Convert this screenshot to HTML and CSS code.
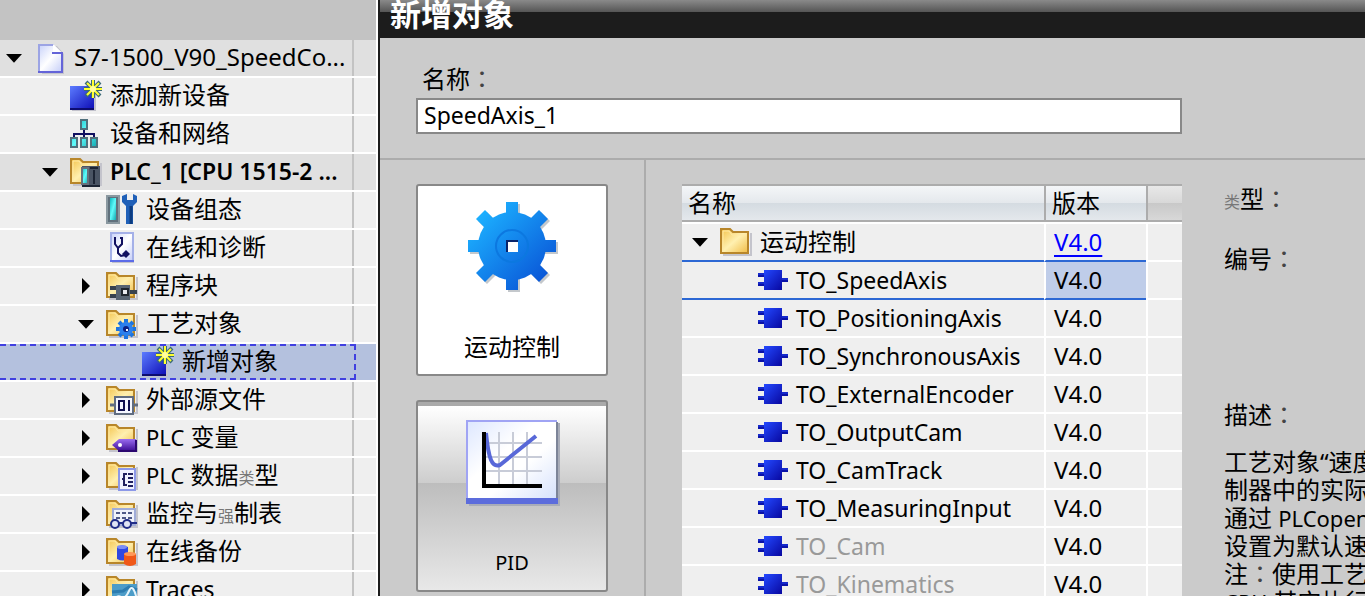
FILE: index.html
```html
<!DOCTYPE html>
<html lang="zh-CN">
<head>
  <meta charset="UTF-8">
  <meta name="viewport" content="width=device-width, initial-scale=1.0">
  <title>新增对象</title>
  <link rel="stylesheet" href="styles.css">
</head>
<body>
  <!-- Shared icon shapes -->
  <svg class="defs" aria-hidden="true">
    <defs>
      <linearGradient id="gold" x1="0" y1="0" x2="1" y2="1">
        <stop offset="0" stop-color="#f3c24a"/><stop offset=".5" stop-color="#fff0b0"/><stop offset="1" stop-color="#f0bb45"/>
      </linearGradient>
      <linearGradient id="blue" x1="0" y1="0" x2="1" y2="1">
        <stop offset="0" stop-color="#5c7cff"/><stop offset="1" stop-color="#1010b8"/>
      </linearGradient>
      <linearGradient id="chip" x1="0" y1="0" x2="1" y2="1">
        <stop offset="0" stop-color="#2348ff"/><stop offset="1" stop-color="#0808a0"/>
      </linearGradient>
      <linearGradient id="paper" x1="0" y1="0" x2="1" y2="1">
        <stop offset="0" stop-color="#c8d2fa"/><stop offset=".5" stop-color="#ffffff"/><stop offset="1" stop-color="#c4cdf8"/>
      </linearGradient>
      <linearGradient id="sheet" x1="0" y1="0" x2="1" y2="1">
        <stop offset="0" stop-color="#dce6ff"/><stop offset=".4" stop-color="#ffffff"/><stop offset=".6" stop-color="#ffffff"/><stop offset="1" stop-color="#d4e0fc"/>
      </linearGradient>
      <linearGradient id="sky" gradientUnits="userSpaceOnUse" x1="14" y1="14" x2="78" y2="78">
        <stop offset="0" stop-color="#1cb0ff"/><stop offset="1" stop-color="#0a58d8"/>
      </linearGradient>
      <linearGradient id="cyan" x1="0" y1="0" x2="1" y2="1">
        <stop offset="0" stop-color="#10b8c0"/><stop offset=".5" stop-color="#60fafa"/><stop offset="1" stop-color="#10a8b0"/>
      </linearGradient>
      <linearGradient id="tag" x1="0" y1="0" x2="0" y2="1">
        <stop offset="0" stop-color="#9a6cf0"/><stop offset="1" stop-color="#3c0c94"/>
      </linearGradient>
    </defs>
    <symbol id="folder" viewBox="0 0 32 32">
      <path d="M3 29h28V7" fill="none" stroke="#c4c4cc" stroke-width="2"/>
      <path d="M1 3h9l3 3h15v21H1z" fill="url(#gold)" stroke="#b8862a" stroke-width="2"/>
      <path d="M3 26V5h6l3 4h14" fill="none" stroke="#ffe9a4" stroke-width="1"/>
    </symbol>
    <symbol id="new" viewBox="0 0 32 32">
      <path d="M2 8h24v23H2z" fill="#c2c2cc"/>
      <path d="M0 6h24v22H0z" fill="url(#blue)"/>
      <path d="M0 28h24v2H0z" fill="#0c0c70"/>
      <path d="M23 0v18M14 9h18M16 2l14 14M30 2L16 16" stroke="#3a6a78" stroke-width="4"/>
      <path d="M23 0v18M14 9h18M17 3l12 12M29 3L17 15" stroke="#ffff30" stroke-width="2"/>
      <circle cx="23" cy="9" r="3" fill="#ffffa0"/>
    </symbol>
    <symbol id="block" viewBox="0 0 32 32">
      <path d="M0 11h8M0 20h8M22 16h8" stroke="#0a12a8" stroke-width="4"/>
      <path d="M0 10h7M0 19h7M23 15h7" stroke="#2040f0" stroke-width="1"/>
      <path d="M6 6h18v20H6z" fill="url(#chip)"/>
    </symbol>
  </svg>

  <div class="app">
    <nav class="sidebar">
      <div class="sidebar-head"></div>
      <ul class="tree">
        <li class="row root shaded">
          <div class="cell">
            <i class="arrow down"></i>
            <svg class="icon" viewBox="0 0 32 32">
              <path d="M4 4h15l7 8v20H4z" fill="#c4c4cc"/>
              <path d="M1 3h15l8 8v19H1z" fill="url(#paper)"/>
              <path d="M1 30V3h15" fill="none" stroke="#9ca4e4" stroke-width="2"/>
              <path d="M15 2v9h9z" fill="#fff"/>
              <path d="M14 11h10v19H0" fill="none" stroke="#6464d8" stroke-width="2"/>
            </svg>
            <span>S7-1500_V90_SpeedCo...</span>
          </div>
        </li>
        <li class="row l1">
          <div class="cell">
            <svg class="icon"><use href="#new"/></svg>
            <span>添加新设备</span>
          </div>
        </li>
        <li class="row l1">
          <div class="cell">
            <svg class="icon" viewBox="0 0 32 32">
              <path d="M14 10v9M4 22v-6h20v6" fill="none" stroke="#101060" stroke-width="2"/>
              <g fill="url(#cyan)" stroke="#50707c" stroke-width="2">
                <path d="M11 2h6v9h-6zM1 20h6v9H1zM11 20h6v9h-6zM21 20h6v9h-6z"/>
              </g>
            </svg>
            <span>设备和网络</span>
          </div>
        </li>
        <li class="row l1 shaded">
          <div class="cell">
            <i class="arrow down"></i>
            <svg class="icon" viewBox="0 0 32 32">
              <use href="#folder" width="32" height="32"/>
              <path d="M12 10h18v20H12z" fill="#4a5464"/>
              <path d="M12 12h6v16h-6z" fill="url(#cyan)" stroke="#66707c" stroke-width="2"/>
              <path d="M20 12h8M24 14v14M12 30h18" stroke="#1c2434" stroke-width="2"/>
            </svg>
            <span class="en bold">PLC_1 [CPU 1515-2 ...</span>
          </div>
        </li>
        <li class="row l2">
          <div class="cell">
            <svg class="icon" viewBox="0 0 32 32">
              <path d="M1 2h12v27H1z" fill="#60707c" stroke="#8a98a0" stroke-width="2"/>
              <path d="M4 4h6v22H4z" fill="url(#cyan)"/>
              <path d="M16 2v6l4 4v18h7V12l4-4V2l-4-2v6h-6V0z" fill="#2060b8"/>
              <path d="M25 12v18" stroke="#0c3c80" stroke-width="3"/>
            </svg>
            <span>设备组态</span>
          </div>
        </li>
        <li class="row l2">
          <div class="cell">
            <svg class="icon" viewBox="0 0 32 32">
              <path d="M6 3h22v28H6z" fill="#c2c2cc"/>
              <path d="M5 1h22v28H5z" fill="url(#paper)" stroke="#a4b0e8" stroke-width="2"/>
              <path d="M4 29h24" stroke="#5c6ce8" stroke-width="2"/>
              <path d="M10 6H9v6l3 4 4-4V6h-2M12 16v5l3 3 5-1" fill="none" stroke="#101060" stroke-width="2"/>
              <path d="M20 18l4 4-4 4-4-4z" fill="#101060"/>
            </svg>
            <span>在线和诊断</span>
          </div>
        </li>
        <li class="row l2">
          <div class="cell">
            <i class="arrow right"></i>
            <svg class="icon" viewBox="0 0 32 32">
              <use href="#folder" width="32" height="32"/>
              <path d="M4 18h8M4 26h8M24 22h7" stroke="#38424e" stroke-width="4"/>
              <path d="M10 15h14v15H10z" fill="#586472"/>
              <path d="M16 19h6v6h-6z" fill="#e8eaee" stroke="#20262e" stroke-width="2"/>
            </svg>
            <span>程序块</span>
          </div>
        </li>
        <li class="row l2">
          <div class="cell">
            <i class="arrow down"></i>
            <svg class="icon" viewBox="0 0 32 32">
              <use href="#folder" width="32" height="32"/>
              <path d="M20 11v20M10 21h20M13 14l14 14M27 14L13 28" stroke="#1c74e0" stroke-width="4"/>
              <circle cx="20" cy="21" r="7" fill="#2c80ec"/>
              <circle cx="20" cy="21" r="3" fill="#0c2080"/>
              <path d="M20 21h2v2h-2z" fill="#fff"/>
            </svg>
            <span>工艺对象</span>
          </div>
        </li>
        <li class="row l3 selected">
          <div class="cell">
            <svg class="icon"><use href="#new"/></svg>
            <span>新增对象</span>
          </div>
        </li>
        <li class="row l2">
          <div class="cell">
            <i class="arrow right"></i>
            <svg class="icon" viewBox="0 0 32 32">
              <use href="#folder" width="32" height="32"/>
              <path d="M4 21h28" stroke="#606c80" stroke-width="3"/>
              <path d="M9 13h18v17H9z" fill="#f4f6ff" stroke="#606c80" stroke-width="2"/>
              <path d="M13 17h5v9h-5zM23 16v11" fill="none" stroke="#101050" stroke-width="2"/>
            </svg>
            <span>外部源文件</span>
          </div>
        </li>
        <li class="row l2">
          <div class="cell">
            <i class="arrow right"></i>
            <svg class="icon" viewBox="0 0 32 32">
              <use href="#folder" width="32" height="32"/>
              <path d="M6 23l7-6h17v12H13z" fill="url(#tag)"/>
              <path d="M12 29h18V18" fill="none" stroke="#2c0870" stroke-width="2"/>
              <circle cx="14" cy="23" r="2" fill="#fff"/>
            </svg>
            <span><span class="mixed">PLC</span> 变量</span>
          </div>
        </li>
        <li class="row l2">
          <div class="cell">
            <i class="arrow right"></i>
            <svg class="icon" viewBox="0 0 32 32">
              <use href="#folder" width="32" height="32"/>
              <path d="M13 9h16v21H13z" fill="#f0f2ff" stroke="#8c98e8" stroke-width="2"/>
              <path d="M21 14h-3v11h3M16 19h2" fill="none" stroke="#202060" stroke-width="2"/>
              <path d="M22 14h5M22 18h5M22 22h5M22 26h5" stroke="#202060" stroke-width="2"/>
            </svg>
            <span><span class="mixed">PLC</span> 数据<small>类</small>型</span>
          </div>
        </li>
        <li class="row l2">
          <div class="cell">
            <i class="arrow right"></i>
            <svg class="icon" viewBox="0 0 32 32">
              <use href="#folder" width="32" height="32"/>
              <path d="M7 11h22v16H7z" fill="#f0f2fa" stroke="#a0acd8" stroke-width="2"/>
              <path d="M10 15h17M10 20h17" stroke="#505a88" stroke-width="2" stroke-dasharray="4 2"/>
              <g fill="#dfe3f4" stroke="#202c88" stroke-width="2">
                <circle cx="9" cy="26" r="4"/><circle cx="21" cy="26" r="4"/>
                <path d="M13 25h4M25 25h6"/>
              </g>
            </svg>
            <span>监控与<small>强</small>制表</span>
          </div>
        </li>
        <li class="row l2">
          <div class="cell">
            <i class="arrow right"></i>
            <svg class="icon" viewBox="0 0 32 32">
              <use href="#folder" width="32" height="32"/>
              <path d="M11 11q6-3 11 0v12q-5 3-11 0z" fill="#3048e0"/>
              <ellipse cx="16" cy="11" rx="5" ry="2" fill="#7c8cf4"/>
              <path d="M18 18q6-3 12 0v10q-6 4-12 0z" fill="#f05818"/>
              <ellipse cx="24" cy="18" rx="6" ry="2" fill="#ff9858"/>
            </svg>
            <span>在线备份</span>
          </div>
        </li>
        <li class="row l2">
          <div class="cell">
            <i class="arrow right"></i>
            <svg class="icon" viewBox="0 0 32 32">
              <use href="#folder" width="32" height="32"/>
              <path d="M6 10h25v20H6z" fill="#4c9cc8"/>
              <path d="M6 18l11-1 6-4 8 3" fill="none" stroke="#2c7cb0" stroke-width="3"/>
              <path d="M6 28q5-8 9-5t8-6 8 9" fill="none" stroke="#e4f4fc" stroke-width="2"/>
            </svg>
            <span class="en">Traces</span>
          </div>
        </li>
      </ul>
    </nav>

    <main class="dialog">
      <h1 class="title">新增对象</h1>

      <div class="name-form">
        <label for="name">名称<span class="colon" lang="zh-TW">：</span></label>
        <input id="name" type="text" value="SpeedAxis_1">
      </div>

      <div class="content">
        <div class="kinds">
          <button class="kind active" type="button">
            <svg viewBox="0 0 92 92">
              <g fill="#c4c8cc" transform="translate(2 2)">
                <path d="M40 2h12v88H40zM2 40h88v12H2z"/>
                <path d="M10 19l9-9 63 63-9 9zM73 10l9 9-63 63-9-9z"/>
              </g>
              <g fill="url(#sky)">
                <path d="M40 2h12v88H40z"/>
                <path d="M2 40h88v12H2z"/>
                <path d="M10 19l9-9 63 63-9 9z"/>
                <path d="M73 10l9 9-63 63-9-9z"/>
                <circle cx="46" cy="46" r="34"/>
              </g>
              <circle cx="46" cy="46" r="16" fill="none" stroke="#0c78e0" stroke-width="2"/>
              <path d="M40 40h12v12H40z" fill="#08246c"/>
              <path d="M42 42h10v10H42z" fill="#fff"/>
            </svg>
            <span>运动控制</span>
          </button>
          <button class="kind" type="button">
            <svg viewBox="0 0 92 92">
              <path d="M3 7h91v83H3z" fill="#a8acb8"/>
              <path d="M0 4h92v80H0z" fill="url(#sheet)"/>
              <path d="M1 84V5h90" fill="none" stroke="#a0a4f4" stroke-width="2"/>
              <path d="M91 6v77" stroke="#7c8498" stroke-width="2"/>
              <path d="M0 82h92v6H0z" fill="#5c6cdc"/>
              <path d="M33 16v52M47 16v52M61 16v52M20 27h56M20 41h56M20 55h56" stroke="#c8ccd8" stroke-width="2"/>
              <path d="M20 17q2 20 5 27t9 5L70 20" fill="none" stroke="#5868d8" stroke-width="4"/>
              <path d="M18 16v54h58" fill="none" stroke="#000" stroke-width="4"/>
            </svg>
            <span class="pid">PID</span>
          </button>
        </div>

        <div class="objects">
          <table>
            <colgroup><col><col class="ver"><col class="rest"></colgroup>
            <thead>
              <tr><th>名称</th><th>版本</th><th></th></tr>
            </thead>
            <tbody>
              <tr class="group">
                <td><div class="item"><i class="arrow down"></i><svg class="icon"><use href="#folder"/></svg><span>运动控制</span></div></td>
                <td><a href="#">V4.0</a></td><td></td>
              </tr>
              <tr class="selected"><td><div class="item"><svg class="icon"><use href="#block"/></svg>TO_SpeedAxis</div></td><td>V4.0</td><td></td></tr>
              <tr><td><div class="item"><svg class="icon"><use href="#block"/></svg>TO_PositioningAxis</div></td><td>V4.0</td><td></td></tr>
              <tr><td><div class="item"><svg class="icon"><use href="#block"/></svg>TO_SynchronousAxis</div></td><td>V4.0</td><td></td></tr>
              <tr><td><div class="item"><svg class="icon"><use href="#block"/></svg>TO_ExternalEncoder</div></td><td>V4.0</td><td></td></tr>
              <tr><td><div class="item"><svg class="icon"><use href="#block"/></svg>TO_OutputCam</div></td><td>V4.0</td><td></td></tr>
              <tr><td><div class="item"><svg class="icon"><use href="#block"/></svg>TO_CamTrack</div></td><td>V4.0</td><td></td></tr>
              <tr><td><div class="item"><svg class="icon"><use href="#block"/></svg>TO_MeasuringInput</div></td><td>V4.0</td><td></td></tr>
              <tr class="off"><td><div class="item"><svg class="icon"><use href="#block"/></svg>TO_Cam</div></td><td>V4.0</td><td></td></tr>
              <tr class="off"><td><div class="item"><svg class="icon"><use href="#block"/></svg>TO_Kinematics</div></td><td>V4.0</td><td></td></tr>
            </tbody>
          </table>
        </div>

        <aside class="info">
          <h2><small>类</small>型<span class="colon" lang="zh-TW">：</span></h2>
          <h2 class="number">编号<span class="colon" lang="zh-TW">：</span></h2>
          <h2>描述<span class="colon" lang="zh-TW">：</span></h2>
          <p>工艺对象“速度<br>制器中的实际<br>通过 <span class="mixed">PLCopen</span><br>设置为默认速<br>注<span class="colon" lang="zh-TW">：</span>使用工艺<br><span class="mixed">CPU</span> 其它执行</p>
        </aside>
      </div>
    </main>
  </div>
</body>
</html>
```

FILE: styles.css
```css
* { margin: 0; padding: 0; box-sizing: border-box; }

body {
  height: 100vh;
  overflow: hidden;
  background: #cbcbcb;
  color: #000;
  font-family: "Noto Sans", "Noto Sans CJK SC", sans-serif;
  font-size: 24px;
  line-height: 34px;
}

button, input { font: inherit; color: inherit; }
.defs { position: absolute; width: 0; height: 0; }
.en { font-size: 23px; }
.mixed { font-size: 22px; line-height: 1; }
.bold { font-weight: 600; }
small { font-size: 16px; line-height: 1; color: #777; }
/* the TC face centres its full-width colon */
.colon { font-family: "Noto Sans CJK TC", sans-serif; line-height: 1; color: #444; }

.app { display: flex; height: 100%; }

/* Project tree */
.sidebar {
  flex: 0 0 380px;
  border-right: 2px solid #1c1c1c;
  padding-right: 2px;
  background: #fff;
  overflow: hidden;
}
.sidebar-head { height: 40px; background: #c3c3c3; }
.tree { list-style: none; }
.row {
  height: 36px;
  margin-bottom: 2px;
  padding-right: 22px;
  background: #efefef;
}
.cell {
  display: flex;
  align-items: center;
  gap: 8px;
  height: 36px;
  border-right: 2px solid #c3c3c3;
  white-space: nowrap;
}
.cell > span { padding-bottom: 2px; }
.shaded { background: #e0e0e0; }
.root .cell { padding-left: 38px; gap: 4px; }
.l1 .cell { padding-left: 70px; }
.l2 .cell { padding-left: 106px; }
.l3 .cell { padding-left: 142px; }
.row.selected { background: #b4c1de; padding-right: 20px; }
.row.selected .cell { border: 2px dashed #4040e0; border-left: 0; }

.icon { flex: none; width: 32px; height: 32px; }
.arrow { flex: none; width: 16px; height: 16px; background: #000; }
.cell .arrow { margin-left: -28px; margin-right: 4px; }
.root .arrow { margin-left: -32px; margin-right: 12px; }
.arrow.down { clip-path: polygon(0 25%, 100% 25%, 50% 80%); }
.arrow.right { clip-path: polygon(25% 0, 75% 50%, 25% 100%); }

/* Dialog */
.dialog { flex: 1; min-width: 0; display: flex; flex-direction: column; }
.title {
  height: 38px;
  padding-left: 10px;
  background: linear-gradient(#8a8a8a, #555 12px, #1c1c1c 12px);
  color: #fff;
  font-size: 31px;
  line-height: 28px;
}
.name-form {
  height: 122px;
  padding: 24px 183px 0 36px;
  border-bottom: 2px solid #acacac;
}
.name-form label { display: block; height: 36px; padding-left: 6px; }
.name-form input {
  display: block;
  width: 100%;
  height: 36px;
  padding: 0 6px 2px;
  border: 2px solid #888;
  background: #fff;
  font-size: 23px;
}

.content { flex: 1; min-height: 0; display: flex; }
.kinds {
  flex: 0 0 266px;
  display: flex;
  flex-direction: column;
  gap: 24px;
  padding: 24px 36px;
  border-right: 2px solid #acacac;
}
.kind {
  flex: none;
  display: flex;
  flex-direction: column;
  align-items: center;
  justify-content: space-between;
  height: 192px;
  padding: 14px 0 10px;
  border: 2px solid #888;
  border-radius: 3px;
  background: linear-gradient(#aaa 4px, #fff 4px, #cdcdcd 43%, #bdbdbd 43%, #e8e8e8);
}
.kind.active { background: #fff; }
.kind svg { width: 92px; height: 92px; overflow: visible; }
.pid { font-size: 20px; }

/* Object table */
.objects { flex: 1; min-width: 0; padding: 24px 0 0 36px; overflow: hidden; }
table { width: 100%; table-layout: fixed; border-collapse: separate; border-spacing: 0; }
.ver { width: 102px; }
.rest { width: 36px; }
th {
  height: 38px;
  padding-left: 6px;
  border: solid #acacac;
  border-width: 2px 0;
  background: linear-gradient(#f4f6f8, #e4e8ec 50%, #d4dbe1 50%, #e4e8ec);
  font-weight: 400;
  text-align: left;
}
th + th { border-left-width: 2px; }
th:last-child { background: linear-gradient(#e8e8e8, #d8d8d8 50%, #c8c8c8 50%, #d8d8d8); }
td {
  height: 38px;
  padding: 0;
  border-bottom: 2px solid #fff;
  background: #efefef;
}
td + td { padding-left: 8px; border-left: 2px solid #fff; }
td a { color: #00f; text-decoration-thickness: 2px; text-underline-offset: 4px; }
.item {
  display: flex;
  align-items: center;
  gap: 6px;
  height: 36px;
  padding-left: 76px;
  font-size: 23px;
  white-space: nowrap;
}
.group .item { padding-left: 10px; gap: 8px; font-size: 24px; }
.group .arrow { margin-right: 4px; }
.group td { border-top: 2px solid #fff; height: 40px; }
.off .item { color: #999; }
tr.selected td:not(:last-child), .group td:not(:last-child) { border-bottom-color: #2c68d4; }
tr.selected td:nth-child(2) { background: #bfcde9; }

/* Object details */
.info { flex: 0 0 183px; padding: 22px 0 0 42px; overflow: hidden; white-space: nowrap; }
.info h2 { font-size: 24px; font-weight: 400; }
.info .number { margin: 26px 0 122px; }
.info p { margin-top: 16px; line-height: 28px; }
```
